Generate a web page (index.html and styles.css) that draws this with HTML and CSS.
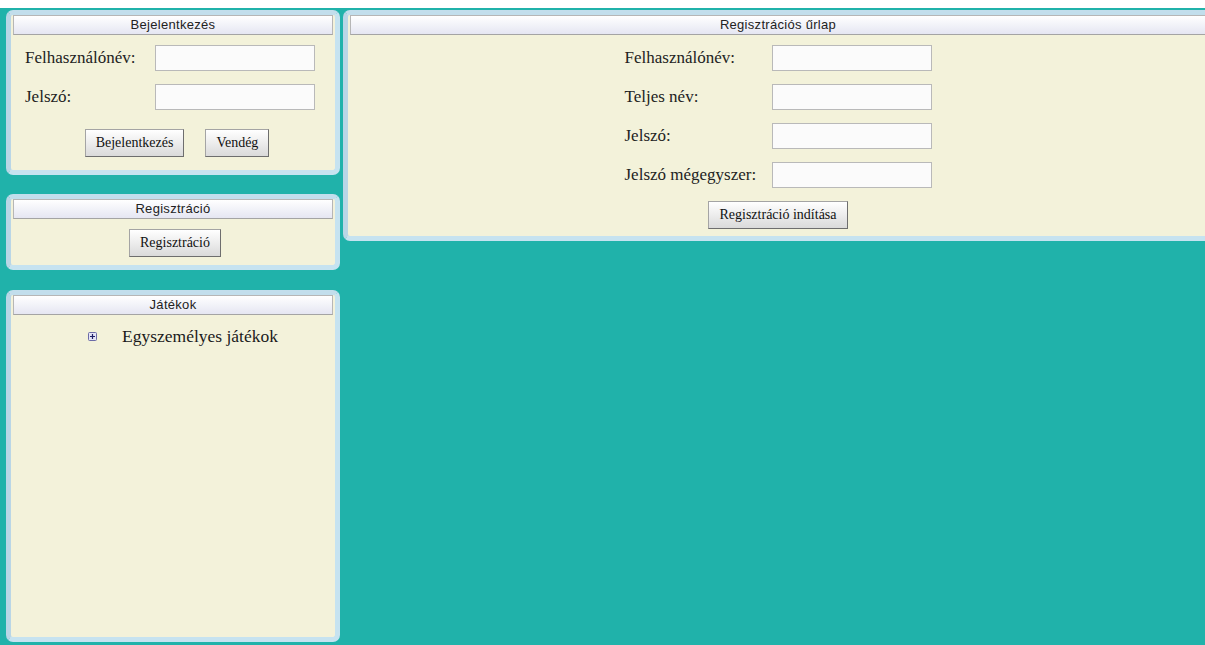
FILE: index.html
```html
<!DOCTYPE html>
<html lang="hu">
<head>
<meta charset="utf-8">
<title>Regisztráció</title>
<link rel="stylesheet" href="styles.css">
</head>
<body>
<div class="page">
  <div class="sidebar">
    <section class="panel panel-login">
      <div class="panel-title">Bejelentkezés</div>
      <form class="login-form">
        <label class="field-label" for="login-user">Felhasználónév:</label>
        <input class="text-input" id="login-user" type="text">
        <label class="field-label" for="login-pass">Jelszó:</label>
        <input class="text-input" id="login-pass" type="password">
        <div class="button-row">
          <button type="button" class="btn">Bejelentkezés</button>
          <button type="button" class="btn">Vendég</button>
        </div>
      </form>
    </section>

    <section class="panel panel-register">
      <div class="panel-title">Regisztráció</div>
      <div class="button-row single">
        <button type="button" class="btn">Regisztráció</button>
      </div>
    </section>

    <section class="panel panel-games">
      <div class="panel-title">Játékok</div>
      <ul class="tree">
        <li class="tree-item">
          <svg class="expander" width="9" height="9" viewBox="0 0 9 9" aria-hidden="true">
            <rect x="0.5" y="0.5" width="8" height="8" rx="1" fill="#e4e4f6" stroke="#6b6ba6"/>
            <path d="M2 4.5h5M4.5 2v5" stroke="#1f1f66" stroke-width="1.2"/>
          </svg>
          <span>Egyszemélyes játékok</span>
        </li>
      </ul>
    </section>
  </div>

  <section class="panel panel-main">
    <div class="panel-title">Regisztrációs űrlap</div>
    <form class="signup-form">
      <label class="field-label" for="reg-user">Felhasználónév:</label>
      <input class="text-input" id="reg-user" type="text">
      <label class="field-label" for="reg-name">Teljes név:</label>
      <input class="text-input" id="reg-name" type="text">
      <label class="field-label" for="reg-pass">Jelszó:</label>
      <input class="text-input" id="reg-pass" type="password">
      <label class="field-label" for="reg-pass2">Jelszó mégegyszer:</label>
      <input class="text-input" id="reg-pass2" type="password">
      <div class="button-row submit-row">
        <button type="button" class="btn">Regisztráció indítása</button>
      </div>
    </form>
  </section>
</div>
</body>
</html>
```

FILE: styles.css
```css
html, body {
  margin: 0;
  padding: 0;
}

body {
  background: #ffffff;
  padding-top: 8px;
  overflow: hidden;
  font-family: "Liberation Serif", "Times New Roman", serif;
  color: #1a1a1a;
}

.page {
  height: 637px;
  box-sizing: border-box;
  padding: 2px 0 0 6px;
  background: #20b2aa;
  display: grid;
  grid-template-columns: 334px 870px;
  column-gap: 3px;
  align-items: start;
  overflow: hidden;
}

.sidebar {
  display: flex;
  flex-direction: column;
}

/* rounded cream panel with a pale blue frame */
.panel {
  box-sizing: border-box;
  background: #f3f2da;
  border: 5px solid #c6e3f0;
  border-left-color: #b9d6e6;
  border-top-color: #c2deec;
  border-radius: 7px;
  padding: 0 2px;
}

.panel-title {
  box-sizing: border-box;
  height: 20px;
  border: 1px solid #b6b6b6;
  border-bottom-color: #a4a4a4;
  background: linear-gradient(#ffffff, #e5e6f2);
  font-family: "Liberation Sans", Arial, sans-serif;
  font-size: 13px;
  letter-spacing: 0.3px;
  line-height: 18px;
  text-align: center;
  color: #222;
}

.panel-login {
  height: 165px;
}

.panel-register {
  height: 76px;
  margin-top: 19px;
}

.panel-games {
  height: 352px;
  margin-top: 20px;
}

.panel-main {
  height: 231px;
}

.field-label {
  font-size: 17px;
  color: #222;
}

.text-input {
  box-sizing: border-box;
  width: 160px;
  height: 26px;
  margin: 0;
  border: 1px solid #b9b9b9;
  background: #fbfbfb;
  font-size: 15px;
}

.login-form {
  display: grid;
  grid-template-columns: 130px 160px;
  row-gap: 13px;
  align-items: center;
  padding: 10px 0 0 12px;
}

.signup-form {
  display: grid;
  grid-template-columns: 147px 160px;
  row-gap: 13px;
  align-items: center;
  justify-content: center;
  padding-top: 10px;
}

.button-row {
  grid-column: 1 / -1;
  display: flex;
  justify-content: center;
  gap: 21px;
}

.login-form .button-row {
  margin-top: 6px;
  padding-left: 14px;
}

.button-row.single {
  padding-top: 10px;
  padding-left: 4px;
}

.btn {
  box-sizing: border-box;
  height: 28px;
  padding: 0 10px;
  margin: 0;
  border: 1px solid #a4a4a4;
  border-right-color: #6e6e6e;
  border-bottom-color: #6e6e6e;
  border-radius: 0;
  background: linear-gradient(#ffffff, #dadada);
  font-family: "Liberation Serif", "Times New Roman", serif;
  font-size: 14px;
  color: #111;
}

.tree {
  list-style: none;
  margin: 0;
  padding: 11px 0 0 75px;
}

.tree-item {
  display: flex;
  align-items: center;
  gap: 25px;
  font-size: 17.5px;
}

.expander {
  flex: none;
}
```
